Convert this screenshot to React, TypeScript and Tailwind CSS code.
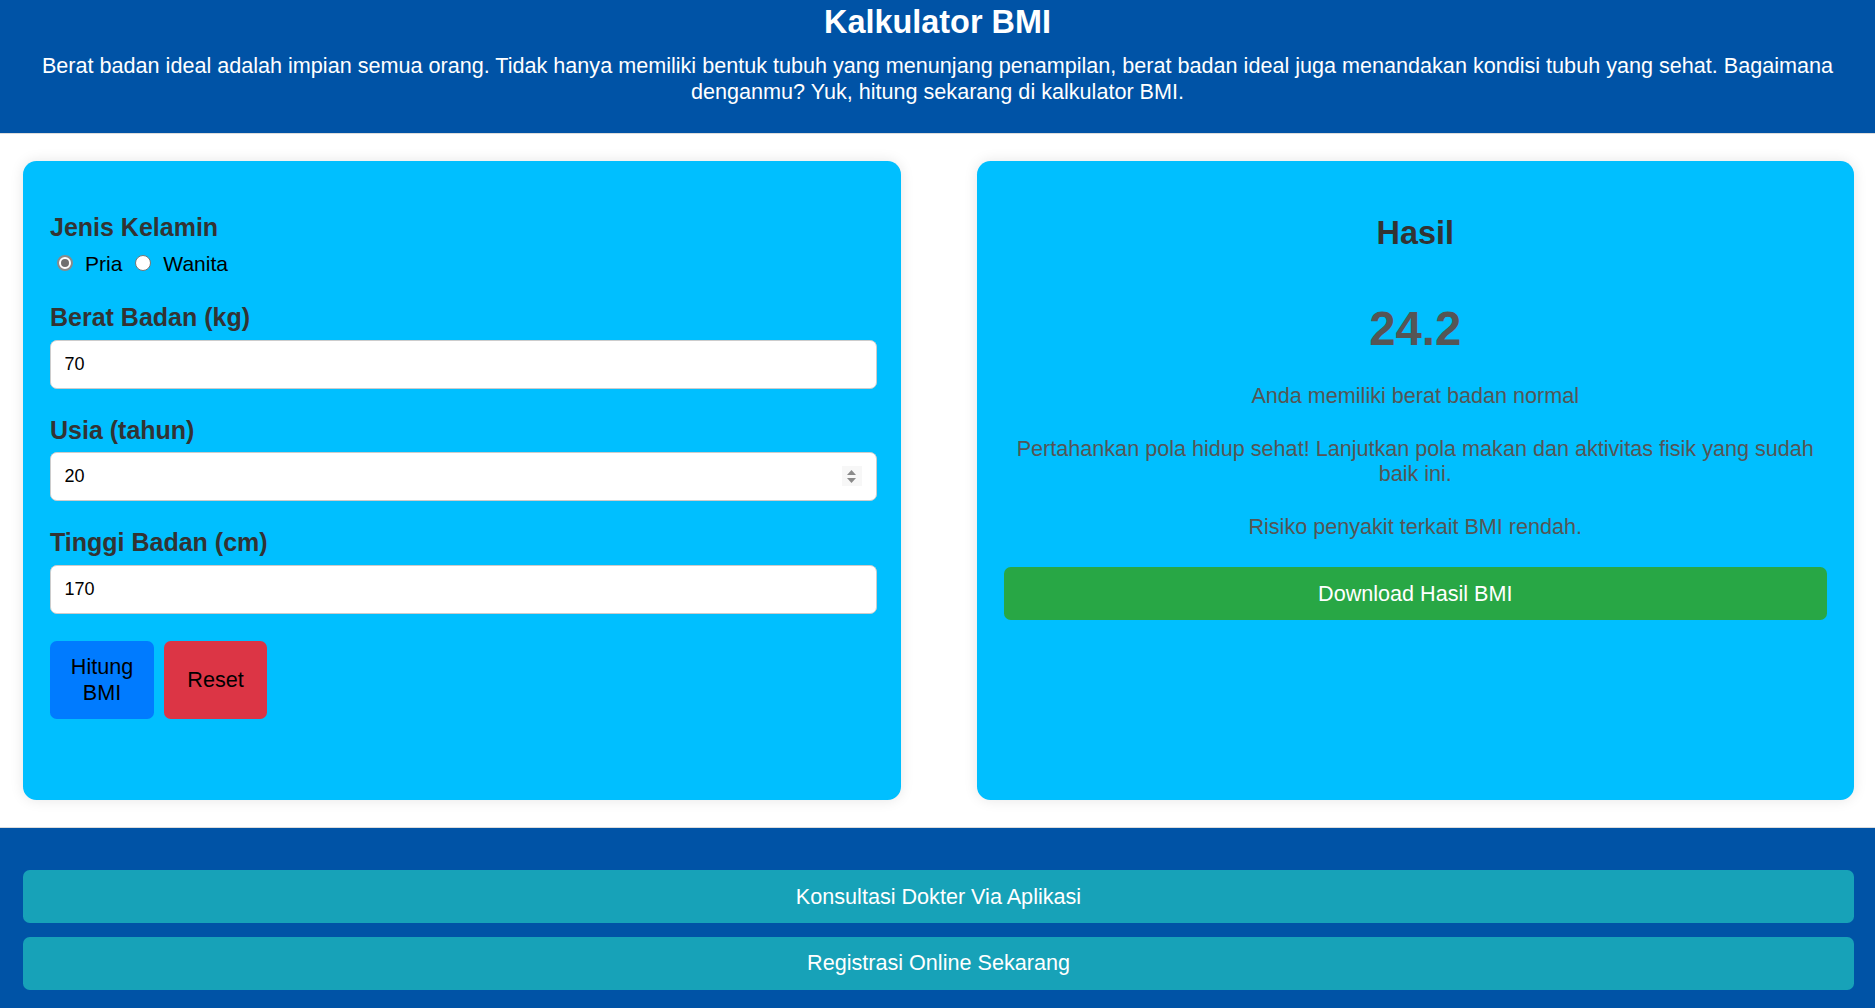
import { useState } from 'react';

export default function App() {
  const [gender, setGender] = useState<'pria' | 'wanita'>('pria');
  const [berat, setBerat] = useState('70');
  const [usia, setUsia] = useState('20');
  const [tinggi, setTinggi] = useState('170');

  return (
    <div className="min-h-screen bg-white font-['Liberation_Sans',Arial,sans-serif]">
      <header className="bg-[#0053a6] text-white text-center pt-[4px] pb-[28px] px-[27px] border-b border-[#dcdcdc]">
        <h1 className="text-[32.4px] font-bold leading-[normal] mb-[12.3px]">Kalkulator BMI</h1>
        <p className="text-[21.6px] leading-[1.2]">
          Berat badan ideal adalah impian semua orang. Tidak hanya memiliki bentuk tubuh yang menunjang penampilan, berat badan ideal juga menandakan kondisi tubuh yang sehat. Bagaimana denganmu? Yuk, hitung sekarang di kalkulator BMI.
        </p>
      </header>

      <main className="flex gap-[76px] pl-[23px] pr-[21px] py-[27px]">
        {/* form */}
        <div className="flex-1 bg-[#00bfff] rounded-[13.5px] p-[27px] shadow-[0_0_14px_rgba(0,0,0,0.1)]">
          <div className="pt-[25px]">
            <div className="mb-[27px]">
              <label className="block text-[25px] font-bold text-[#333] leading-[normal]">Jenis Kelamin</label>
              <div className="flex items-center mt-[10px] text-[21px] leading-[24px] text-black">
                <Radio checked={gender === 'pria'} onClick={() => setGender('pria')} className="ml-[7px] mr-[12px] -mt-[2px]" />
                <span>Pria</span>
                <Radio checked={gender === 'wanita'} onClick={() => setGender('wanita')} className="ml-[13px] mr-[12px] -mt-[2px]" />
                <span>Wanita</span>
              </div>
            </div>

            <Field label="Berat Badan (kg)" value={berat} onChange={setBerat} />
            <Field label="Usia (tahun)" value={usia} onChange={setUsia} spinner />
            <Field label="Tinggi Badan (cm)" value={tinggi} onChange={setTinggi} />

            <div className="flex gap-[10px] mt-[1px] mb-[54px]">
              <button className="w-[104px] bg-[#007bff] text-black text-[21.6px] leading-[1.2] py-[13.5px] rounded-[6.75px]">
                Hitung BMI
              </button>
              <button className="w-[103px] bg-[#dc3545] text-black text-[21.6px] leading-[1.2] py-[13.5px] rounded-[6.75px]">
                Reset
              </button>
            </div>
          </div>
        </div>

        {/* result */}
        <div className="flex-1 bg-[#00bfff] rounded-[13.5px] p-[27px] shadow-[0_0_14px_rgba(0,0,0,0.1)] text-center">
          <h2 className="text-[32.4px] font-bold text-[#333] leading-[normal] mt-[26.5px]">Hasil</h2>
          <div className="text-[47.25px] font-bold text-[#555] leading-[normal] mt-[49px]">24.2</div>
          <p className="text-[21.6px] leading-[1.2] text-[#555] mt-[27px]">Anda memiliki berat badan normal</p>
          <p className="text-[21.6px] leading-[1.2] text-[#555] mt-[27px]">
            Pertahankan pola hidup sehat! Lanjutkan pola makan dan aktivitas fisik yang sudah baik ini.
          </p>
          <p className="text-[21.6px] leading-[1.2] text-[#555] mt-[27px]">Risiko penyakit terkait BMI rendah.</p>
          <button className="w-full mt-[27px] bg-[#28a745] text-white text-[21.6px] leading-[1.2] py-[13.5px] rounded-[6.75px]">
            Download Hasil BMI
          </button>
        </div>
      </main>

      <footer className="bg-[#0053a6] border-t border-[#dcdcdc] pt-[42px] pb-[40px] pl-[23px] pr-[21px] flex flex-col gap-[13.5px]">
        <button className="w-full bg-[#17a2b8] text-white text-[21.6px] leading-[1.2] py-[13.5px] rounded-[6.75px]">
          Konsultasi Dokter Via Aplikasi
        </button>
        <button className="w-full bg-[#17a2b8] text-white text-[21.6px] leading-[1.2] py-[13.5px] rounded-[6.75px]">
          Registrasi Online Sekarang
        </button>
      </footer>
    </div>
  );
}

function Radio({ checked, onClick, className }: { checked: boolean; onClick: () => void; className?: string }) {
  return (
    <span
      onClick={onClick}
      className={`inline-flex items-center justify-center w-[16px] h-[16px] rounded-full bg-white cursor-pointer ${
        checked ? 'border-2 border-[#8a8a8a]' : 'border border-[#767676]'
      } ${className ?? ''}`}
    >
      {checked && <span className="w-[8px] h-[8px] rounded-full bg-[#707070]" />}
    </span>
  );
}

function Field({
  label,
  value,
  onChange,
  spinner,
}: {
  label: string;
  value: string;
  onChange: (v: string) => void;
  spinner?: boolean;
}) {
  return (
    <div className="mb-[27px]">
      <label className="block text-[25px] font-bold text-[#333] leading-[normal] mb-[7.5px]">{label}</label>
      <div className="relative w-[calc(100%+3px)]">
        <input
          type="text"
          value={value}
          onChange={(e) => onChange(e.target.value)}
          className="block w-full h-[49px] bg-white border border-[#cccccc] rounded-[6.75px] px-[13.5px] text-[18px] text-black font-['Liberation_Sans',Arial,sans-serif] outline-none"
        />
        {spinner && (
          <span className="absolute right-[15px] top-[14px] w-[20px] h-[20px] bg-[#f7f7f7] flex flex-col items-center justify-center gap-[3px]">
            <svg width="9" height="5" viewBox="0 0 9 5">
              <path d="M0 5 L4.5 0 L9 5 Z" fill="#8a8a8a" />
            </svg>
            <svg width="9" height="5" viewBox="0 0 9 5">
              <path d="M0 0 L4.5 5 L9 0 Z" fill="#8a8a8a" />
            </svg>
          </span>
        )}
      </div>
    </div>
  );
}
